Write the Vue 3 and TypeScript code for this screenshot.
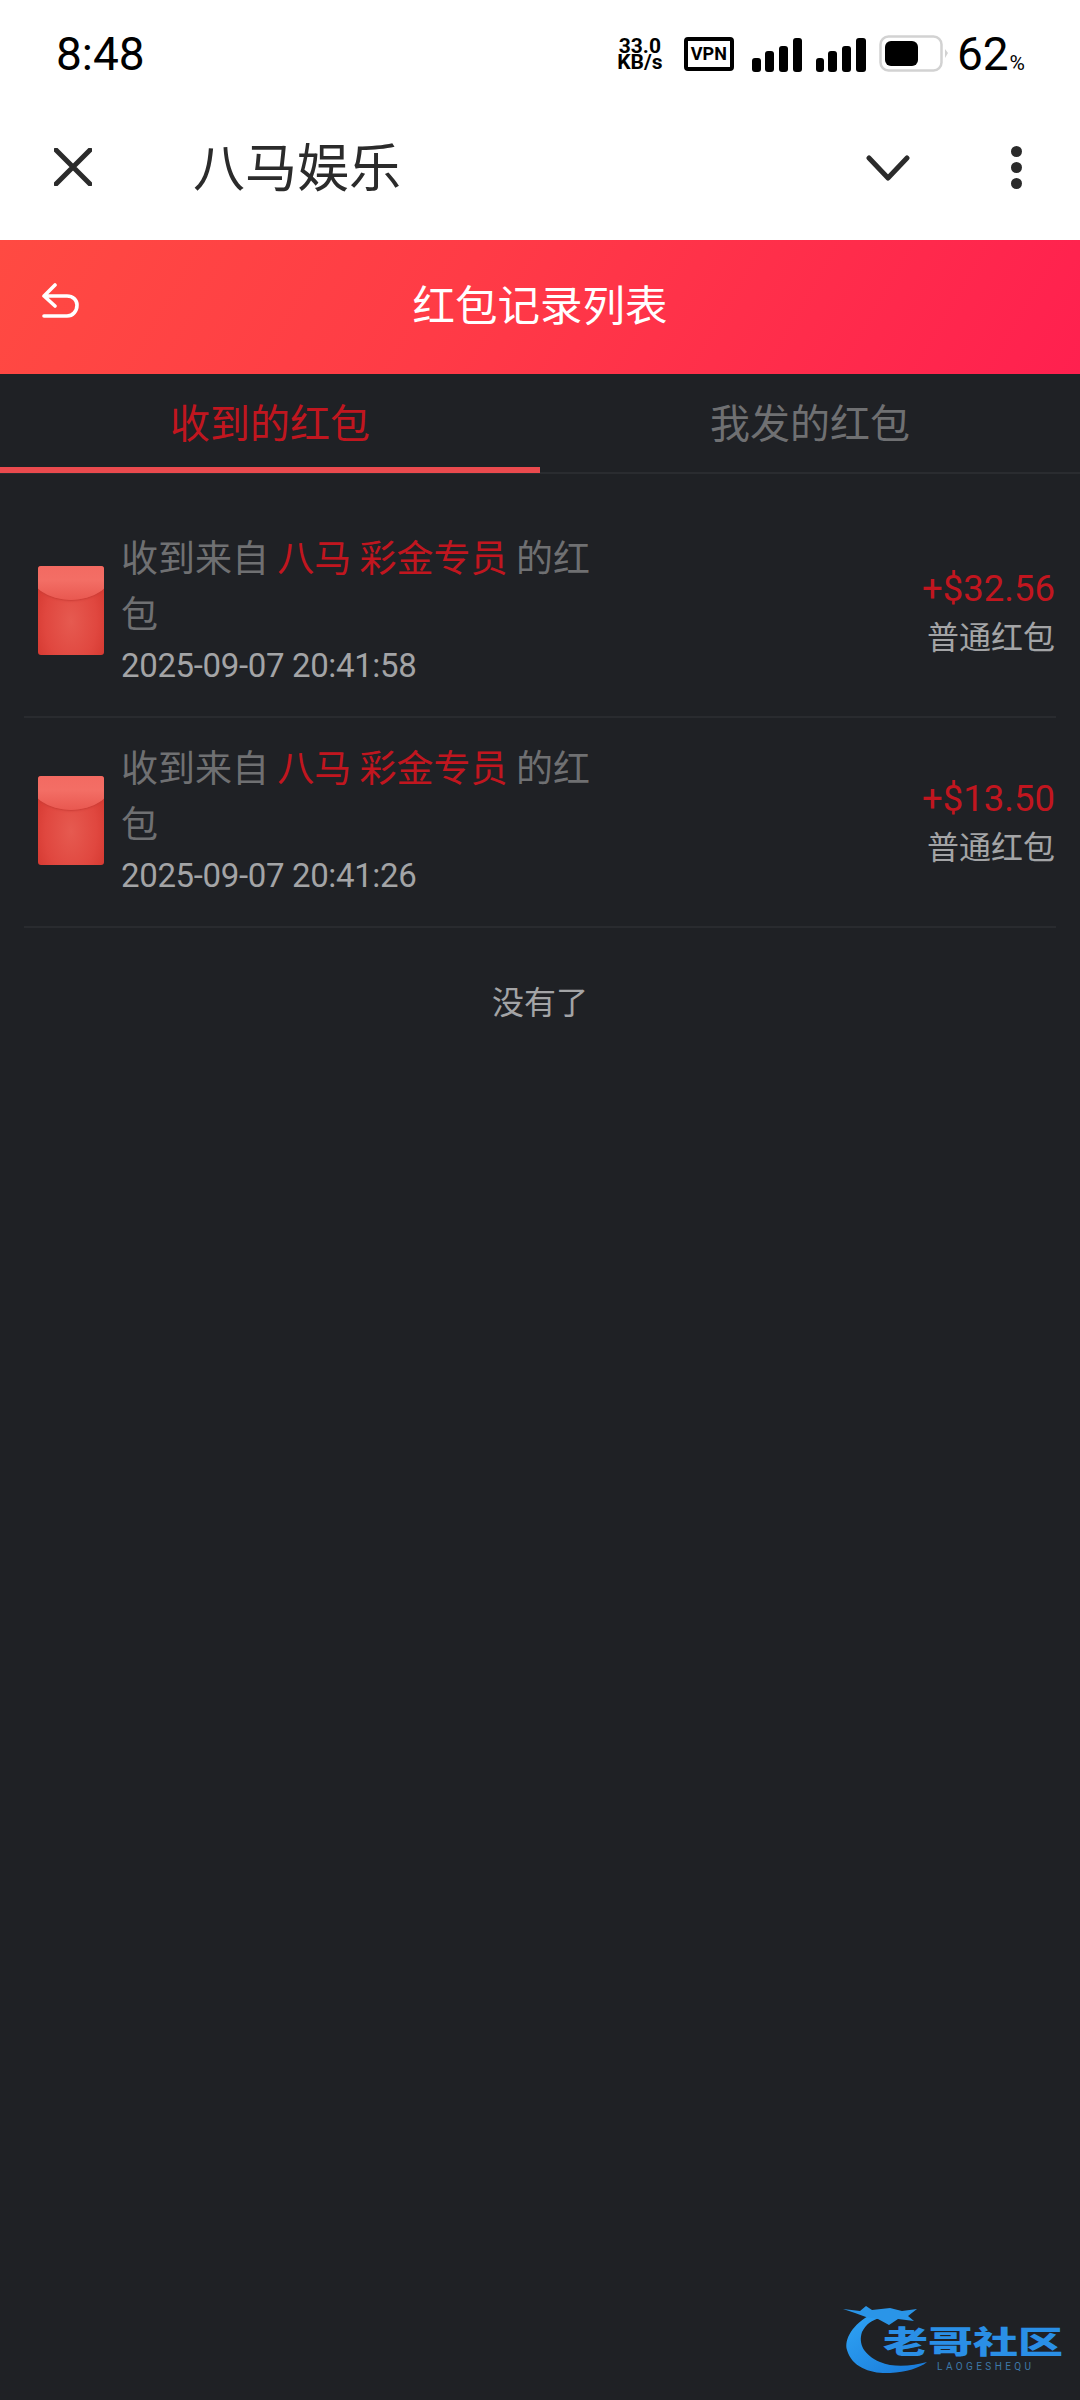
<template>
  <div class="page">
    <div class="status-bar">
      <span class="time">8:48</span>
      <div class="status-right">
        <div class="speed"><span>33.0</span><span>KB/s</span></div>
        <div class="vpn">VPN</div>
        <svg class="signal" width="50" height="34" viewBox="0 0 50 34">
          <rect x="0" y="20" width="9" height="14" rx="3" />
          <rect x="13" y="13" width="9" height="21" rx="3" />
          <rect x="27" y="8" width="9" height="26" rx="3" />
          <rect x="41" y="0" width="9" height="34" rx="3" />
        </svg>
        <svg class="signal second" width="50" height="34" viewBox="0 0 50 34">
          <rect x="0" y="20" width="8" height="14" rx="3" />
          <rect x="12" y="13" width="9" height="21" rx="3" />
          <rect x="26" y="8" width="9" height="26" rx="3" />
          <rect x="40" y="0" width="10" height="34" rx="3" />
        </svg>
        <svg class="battery" width="70" height="37" viewBox="0 0 70 37">
          <rect x="1.5" y="1.5" width="61" height="34" rx="8" fill="none" stroke="#d2d2d2" stroke-width="2.5" />
          <rect x="6" y="6" width="33" height="25" rx="6" fill="#000" />
          <path d="M66 14 L69 18 L66 23 Z" fill="#d2d2d2" />
        </svg>
        <div class="battery-text">62<span>%</span></div>
      </div>
    </div>

    <div class="toolbar">
      <svg class="close" width="38" height="38" viewBox="0 0 38 38">
        <path d="M2 2 L36 36 M36 2 L2 36" stroke="#2b2b2b" stroke-width="5" stroke-linecap="round" />
      </svg>
      <div class="toolbar-title">八马娱乐</div>
      <svg class="chevron" width="44" height="28" viewBox="0 0 44 28">
        <path d="M3 4 L22 24 L41 4" fill="none" stroke="#2b2b2b" stroke-width="5" stroke-linecap="round" stroke-linejoin="round" />
      </svg>
      <div class="dots"><i></i><i></i><i></i></div>
    </div>

    <div class="header">
      <svg class="back" width="38" height="36" viewBox="0 0 38 36">
        <path d="M14 2 L3 13 L14 23 M3 13 H26 C32 13 36 17 36 22 C36 28 32 33 26 33 H3" fill="none" stroke="#fff" stroke-width="3.6" stroke-linecap="round" stroke-linejoin="round" />
      </svg>
      <span class="header-title">红包记录列表</span>
    </div>

    <div class="tabs">
      <div class="tab active">收到的红包</div>
      <div class="tab">我发的红包</div>
    </div>

    <div class="list">
      <div v-for="item in items" :key="item.time" class="row">
        <div class="envelope"><div class="flap"></div></div>
        <div class="info">
          <div class="desc">收到来自 <em>八马 彩金专员</em> 的红<br />包</div>
          <div class="date">{{ item.time }}</div>
        </div>
        <div class="side">
          <div class="amount">{{ item.amount }}</div>
          <div class="kind">普通红包</div>
        </div>
      </div>
    </div>

    <div class="no-more">没有了</div>

    <div class="watermark">
      <svg class="dragon" width="100" height="90" viewBox="0 0 100 90">
        <defs>
          <linearGradient id="dragonBlue" x1="0" y1="0" x2="1" y2="1">
            <stop offset="0" stop-color="#2fa4f5" />
            <stop offset="1" stop-color="#1878d8" />
          </linearGradient>
        </defs>
        <path d="M30 14 C10 24 2 40 5 50 C10 68 30 74 48 73 C64 72 78 68 85 62 C70 66 52 68 38 62 C22 55 16 44 20 32 C24 24 30 20 38 18 Z" fill="url(#dragonBlue)" />
        <path d="M1 9 L18 11 L24 6 L30 10 L48 8 L60 11 L75 9 L66 16 L72 21 L56 19 L47 25 L36 19 L24 17 L13 13 Z" fill="#2a95e8" />
      </svg>
      <div class="wm-title">老哥社区</div>
      <div class="wm-sub">LAOGESHEQU</div>
    </div>
  </div>
</template>

<script setup lang="ts">
const items = [
  { time: '2025-09-07 20:41:58', amount: '+$32.56' },
  { time: '2025-09-07 20:41:26', amount: '+$13.50' }
]
</script>

<style>
html, body {
  margin: 0;
  background: #1f2125;
}
</style>

<style scoped>
.page {
  position: relative;
  width: 1080px;
  height: 2400px;
  overflow: hidden;
  background: #1f2125;
  font-family: Roboto, "Noto Sans CJK SC", sans-serif;
}

.status-bar {
  height: 100px;
  background: #fff;
  display: flex;
  justify-content: space-between;
  padding: 0 55px 0 56px;
  box-sizing: border-box;
}

.time {
  font-size: 46px;
  line-height: 108px;
  color: #000;
}

.status-right {
  display: flex;
  align-items: flex-start;
  padding-top: 36px;
  color: #000;
}

.speed {
  display: flex;
  flex-direction: column;
  align-items: center;
  width: 46px;
  font-size: 21px;
  font-weight: 700;
  line-height: 16px;
  margin-top: 2px;
}

.vpn {
  width: 50px;
  height: 34px;
  margin: 1px 0 0 21px;
  border: 4px solid #000;
  border-radius: 4px;
  box-sizing: border-box;
  font-size: 18px;
  font-weight: 700;
  line-height: 26px;
  text-align: center;
}

.signal {
  margin: 2px 0 0 18px;
  fill: #000;
}

.signal.second {
  margin-left: 14px;
}

.battery {
  margin: -1px 0 0 13px;
}

.battery-text {
  margin-left: 8px;
  font-size: 46px;
  line-height: 36px;
}

.battery-text span {
  font-size: 21px;
  margin-left: 1px;
}

.toolbar {
  height: 140px;
  background: #fff;
  display: flex;
  align-items: center;
  padding: 0 0 6px 54px;
  box-sizing: border-box;
}

.toolbar-title {
  margin: -4px 0 0 101px;
  font-size: 52px;
  line-height: 60px;
  color: #2b2b2b;
  font-family: "Noto Sans CJK SC", sans-serif;
}

.chevron {
  margin-left: auto;
  margin-top: 2px;
}

.dots {
  width: 11px;
  margin: 0 58px 0 101px;
  display: flex;
  flex-direction: column;
  gap: 5px;
}

.dots i {
  width: 11px;
  height: 11px;
  border-radius: 50%;
  background: #2b2b2b;
}

.header {
  height: 134px;
  background: linear-gradient(120deg, #ff4a42 0%, #ff3b46 42%, #ff204f 100%);
  position: relative;
  display: flex;
  align-items: center;
  justify-content: center;
  padding-bottom: 8px;
  box-sizing: border-box;
}

.back {
  position: absolute;
  left: 41px;
  top: 43px;
}

.header-title {
  font-size: 42.5px;
  line-height: 60px;
  color: #fff;
  font-family: "Noto Sans CJK SC", sans-serif;
}

.tabs {
  display: flex;
  height: 100px;
  border-bottom: 2px solid #2a2c30;
  box-sizing: border-box;
}

.tab {
  flex: 1;
  height: 99px;
  box-sizing: border-box;
  text-align: center;
  font-size: 40px;
  line-height: 94px;
  color: #6f7072;
  font-family: "Noto Sans CJK SC", sans-serif;
}

.tab.active {
  color: #c1161f;
  border-bottom: 6px solid #ea4a4e;
}

.list {
  margin: 0 24px;
  padding-top: 34px;
}

.row {
  display: flex;
  align-items: center;
  height: 210px;
  border-bottom: 2px solid #292b2f;
  box-sizing: border-box;
  padding-left: 14px;
}

.envelope {
  position: relative;
  width: 66px;
  height: 89px;
  flex-shrink: 0;
  overflow: hidden;
  border-radius: 3px;
  margin-top: -4px;
  background: radial-gradient(ellipse at 50% 62%, #e65a50 0%, #e0473f 55%, #cf322a 100%);
}

.flap {
  position: absolute;
  left: -8px;
  top: -22px;
  width: 82px;
  height: 56px;
  border-radius: 50%;
  background: linear-gradient(180deg, #f2645c, #f36e65 65%, #e95850);
  box-shadow: 0 1px 2px #c93c35;
}

.info {
  width: 478px;
  margin: -11px 0 0 17px;
}

.desc {
  font-size: 37px;
  line-height: 56px;
  color: #6f7072;
  font-family: "Noto Sans CJK SC", sans-serif;
}

.desc em {
  font-style: normal;
  color: #c1161f;
}

.date {
  font-size: 33px;
  line-height: 40px;
  margin-top: 6px;
  color: #a3a4a6;
  letter-spacing: -0.35px;
}

.side {
  margin: -2px 1px 0 auto;
  text-align: right;
}

.amount {
  font-size: 36.5px;
  line-height: 48px;
  color: #c1161f;
}

.kind {
  font-size: 32px;
  line-height: 44px;
  color: #a3a4a6;
  font-family: "Noto Sans CJK SC", sans-serif;
}

.no-more {
  margin-top: 47px;
  text-align: center;
  font-size: 32px;
  line-height: 50px;
  color: #a3a4a6;
  font-family: "Noto Sans CJK SC", sans-serif;
}

.watermark {
  position: absolute;
  left: 842px;
  top: 2300px;
  width: 235px;
  height: 90px;
}

.dragon {
  position: absolute;
  left: 0;
  top: 0;
}

.wm-title {
  position: absolute;
  left: 41px;
  top: 20px;
  font-size: 45px;
  line-height: 40px;
  font-weight: 900;
  white-space: nowrap;
  color: #2a8fe6;
  font-family: "Noto Sans CJK SC", sans-serif;
  transform: scaleY(0.68);
}

.wm-sub {
  position: absolute;
  left: 95px;
  top: 61px;
  font-size: 10px;
  line-height: 12px;
  letter-spacing: 3.4px;
  color: #3d78a8;
}
</style>
